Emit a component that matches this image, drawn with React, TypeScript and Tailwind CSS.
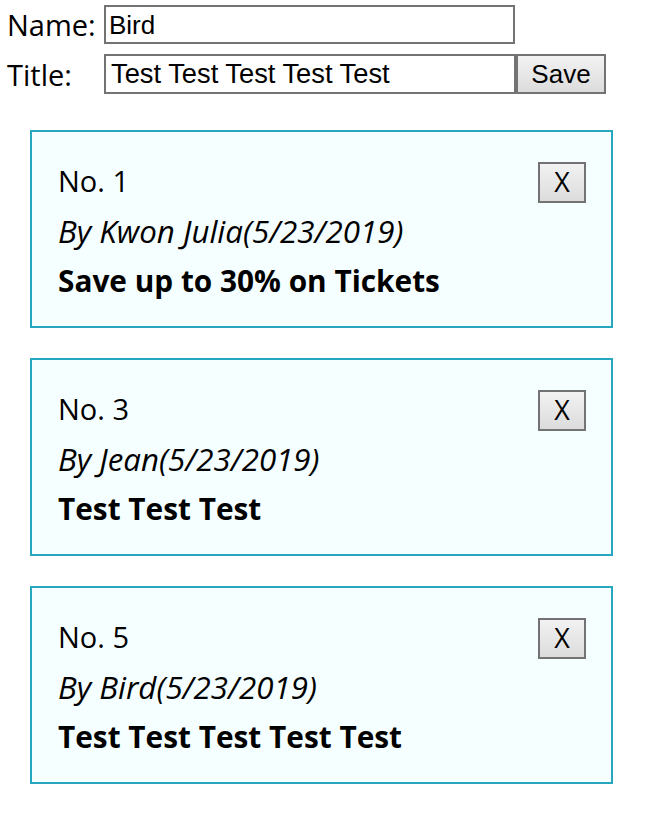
const notes = [
  { no: 1, author: 'Kwon Julia', date: '5/23/2019', title: 'Save up to 30% on Tickets' },
  { no: 3, author: 'Jean', date: '5/23/2019', title: 'Test Test Test' },
  { no: 5, author: 'Bird', date: '5/23/2019', title: 'Test Test Test Test Test' },
];

const uiFont = "font-['Open_Sans',sans-serif]";
const inputFont = "font-['Liberation_Sans',Arial,sans-serif]";

export default function App() {
  return (
    <div className="min-h-screen bg-white text-black">
      {/* Form */}
      <div className="pt-[5px] pl-[7px]">
        <div className="flex items-center h-[39px]">
          <span className={`${uiFont} text-[29px] w-[97px] leading-none`}>Name:</span>
          <input
            defaultValue="Bird"
            className={`${inputFont} text-[26px] w-[411px] h-[39px] border-2 border-[#737373] px-[3px] pt-[1px] outline-none bg-white`}
          />
        </div>
        <div className="flex items-center h-[40px] mt-[10px]">
          <span className={`${uiFont} text-[29px] w-[97px] leading-none`}>Title:</span>
          <input
            defaultValue="Test Test Test Test Test"
            className={`${inputFont} text-[27.3px] w-[412px] h-[40px] border-2 border-[#737373] px-[5px] outline-none bg-white`}
          />
          <button
            className={`${inputFont} text-[26px] w-[90px] h-[40px] border-2 border-[#737373] bg-gradient-to-b from-[#f2f2f2] to-[#dcdcdc] leading-none`}
          >
            Save
          </button>
        </div>
      </div>

      {/* Notes */}
      <div className="flex flex-col gap-[30px] mt-[36px] pl-[30px] w-[613px]">
        {notes.map((n) => (
          <div
            key={n.no}
            className={`${uiFont} relative border-2 border-[#27a6bf] bg-[#f5ffff] h-[198px] pl-[26px] pt-[24px]`}
          >
            <button className="absolute top-[30px] right-[25px] w-[48px] h-[41px] border-2 border-[#737373] bg-gradient-to-b from-[#f2f2f2] to-[#dcdcdc] text-[27px] leading-none pb-[2px]">
              X
            </button>
            <div className="text-[29px] leading-[50px]">No. {n.no}</div>
            <div className="text-[31.3px] leading-[50px] italic">
              By {n.author}({n.date})
            </div>
            <div className="text-[29.8px] leading-[50px] font-bold">{n.title}</div>
          </div>
        ))}
      </div>
    </div>
  );
}
